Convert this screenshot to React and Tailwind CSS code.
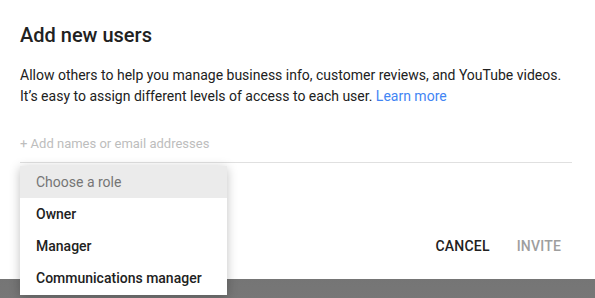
export default function App() {
    const roles = ["Owner", "Manager", "Communications manager"];

    return (
        <div className="relative h-[298px] w-[595px] overflow-hidden bg-gradient-to-b from-[#5a5a5a] to-[#777777] font-['Roboto',sans-serif]">
            <div className="h-[279px] bg-white px-5 pt-[21px]">
                <h1 className="text-[20px] leading-[28px] font-medium text-[#212121]">Add new users</h1>

                <p className="mt-[16px] text-[14px] leading-[21px] text-[#212121]">
                    Allow others to help you manage business info, customer reviews, and YouTube videos.
                    <br />
                    It’s easy to assign different levels of access to each user.{" "}
                    <a className="text-[#4285f4]">Learn more</a>
                </p>

                <div className="mt-[27px] mr-[3px] border-b border-[#e0e0e0] pb-[8px]">
                    <div className="text-[13px] leading-[20px] text-[#bdbdbd]">+ Add names or email addresses</div>
                </div>

                <div className="mt-[65px] flex justify-end gap-[27px] pr-[14px]">
                    <button className="h-9 text-[14px] font-medium tracking-[0.2px] text-[#212121]">CANCEL</button>
                    <button className="h-9 text-[14px] font-medium tracking-[0.2px] text-[#9e9e9e]">INVITE</button>
                </div>
            </div>

            {/* role dropdown */}
            <div className="absolute left-5 top-[166px] w-[207px] bg-white pb-[1px] shadow-[0_2px_10px_rgba(0,0,0,0.25)]">
                <div className="h-8 bg-[#ebebeb] pl-4 text-[14px] leading-8 text-[#757575]">Choose a role</div>
                {roles.map(r => (
                    <div key={r} className="h-8 pl-4 text-[14px] leading-8 font-medium text-[#212121]">{r}</div>
                ))}
            </div>
        </div>
    );
}
